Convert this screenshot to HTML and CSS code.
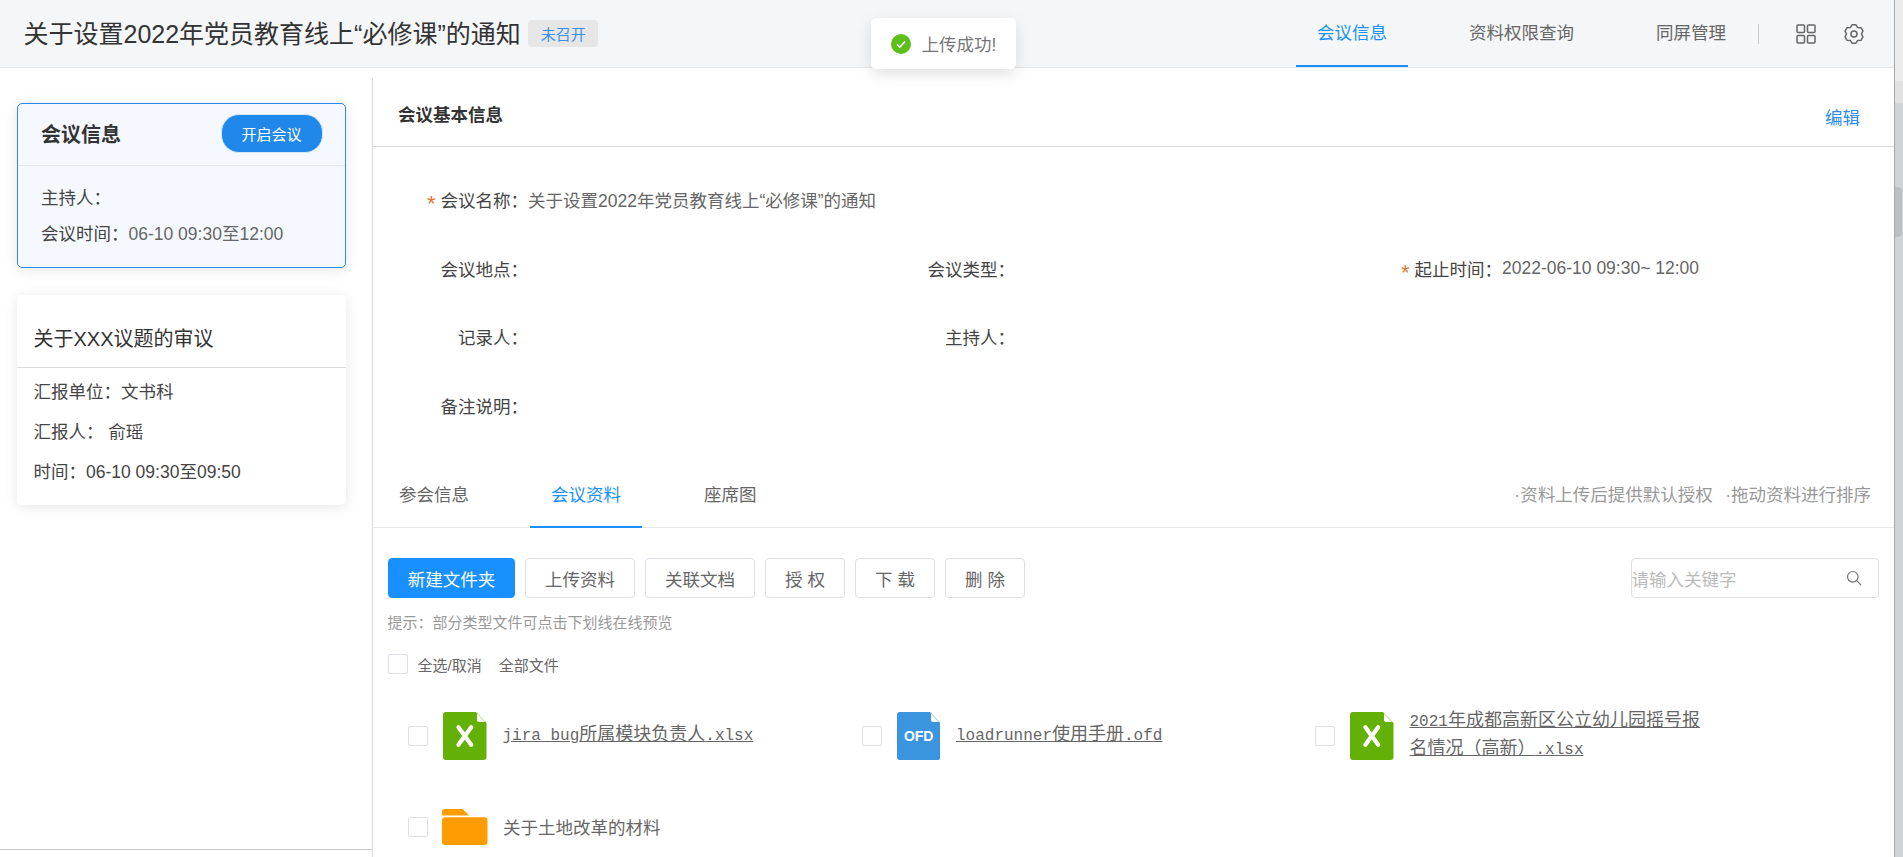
FILE: index.html
```html
<!DOCTYPE html>
<html lang="zh-CN">
<head>
<meta charset="utf-8">
<title>会议信息</title>
<link rel="stylesheet" href="styles.css">
</head>
<body>
<div class="window">
  <div class="page">
    <header class="topbar">
      <h1 class="doc-title">关于设置2022年党员教育线上“必修课”的通知</h1>
      <span class="status-badge">未召开</span>
      <nav class="top-nav">
        <a class="top-tab active">会议信息</a>
        <a class="top-tab">资料权限查询</a>
        <a class="top-tab">同屏管理</a>
      </nav>
      <span class="nav-sep"></span>
      <svg class="nav-icon grid-icon" viewBox="0 0 20 20" fill="none" stroke="#666" stroke-width="1.5">
        <rect x="1" y="1" width="7.5" height="7.5" rx="1"/><rect x="11.5" y="1" width="7.5" height="7.5" rx="1"/>
        <rect x="1" y="11.5" width="7.5" height="7.5" rx="1"/><rect x="11.5" y="11.5" width="7.5" height="7.5" rx="1"/>
      </svg>
      <svg class="nav-icon gear-icon" viewBox="0 0 20 20" fill="none" stroke="#666" stroke-width="1.5" stroke-linejoin="round">
        <path d="M8.04.81H11.96L13.7 3.59L16.98 3.71L18.94 7.1L17.4 10L18.94 12.9L16.98 16.29L13.7 16.41L11.96 19.19H8.04L6.3 16.41L3.02 16.29L1.06 12.9L2.6 10L1.06 7.1L3.02 3.71L6.3 3.59Z"/>
        <circle cx="10" cy="10" r="3"/>
      </svg>
    </header>

    <div class="content">
      <aside class="sidebar">
        <section class="card card-active">
          <div class="card-head">
            <h2 class="card-title">会议信息</h2>
            <button class="pill-btn">开启会议</button>
          </div>
          <div class="card-body">
            <p class="card-line">主持人：</p>
            <p class="card-line">会议时间：<span class="muted">06-10 09:30至12:00</span></p>
          </div>
        </section>
        <section class="card card-topic">
          <h3 class="topic-title">关于XXX议题的审议</h3>
          <div class="topic-body">
            <p class="topic-line">汇报单位：文书科</p>
            <p class="topic-line">汇报人： 俞瑶</p>
            <p class="topic-line">时间：06-10 09:30至09:50</p>
          </div>
        </section>
      </aside>

      <main class="main">
        <div class="section-head">
          <h2 class="section-title">会议基本信息</h2>
          <a class="edit-link">编辑</a>
        </div>

        <div class="form">
          <div class="field field-wide"><span class="field-label"><i class="req">*</i>会议名称：</span><span class="field-value">关于设置2022年党员教育线上“必修课”的通知</span></div>
          <div class="field"><span class="field-label">会议地点：</span></div>
          <div class="field"><span class="field-label">会议类型：</span></div>
          <div class="field"><span class="field-label"><i class="req">*</i>起止时间：</span><span class="field-value">2022-06-10 09:30~ 12:00</span></div>
          <div class="field"><span class="field-label">记录人：</span></div>
          <div class="field field-rest"><span class="field-label">主持人：</span></div>
          <div class="field field-wide"><span class="field-label">备注说明：</span></div>
        </div>

        <div class="sub-tabs">
          <a class="sub-tab">参会信息</a>
          <a class="sub-tab active">会议资料</a>
          <a class="sub-tab">座席图</a>
          <div class="sub-hints"><span>·资料上传后提供默认授权</span><span>·拖动资料进行排序</span></div>
        </div>

        <div class="toolbar">
          <button class="btn btn-primary">新建文件夹</button>
          <button class="btn">上传资料</button>
          <button class="btn">关联文档</button>
          <button class="btn btn-short">授 权</button>
          <button class="btn btn-short">下 载</button>
          <button class="btn btn-short">删 除</button>
          <div class="search">
            <span class="search-placeholder">请输入关键字</span>
            <svg class="search-icon" viewBox="0 0 16 16" fill="none" stroke="#777" stroke-width="1.2" stroke-linecap="round">
              <circle cx="6.8" cy="6.8" r="5.3"/><path d="M10.7 10.7L14.8 14.8"/>
            </svg>
          </div>
        </div>

        <p class="tip">提示：部分类型文件可点击下划线在线预览</p>

        <div class="select-row">
          <span class="check"></span>
          <span class="select-text">全选/取消</span>
          <span class="select-text">全部文件</span>
        </div>

        <div class="files">
          <div class="file">
            <span class="check"></span>
            <svg class="file-icon" viewBox="0 0 43.5 48">
              <path fill="#63b006" d="M3 0H33L43.5 11V45a3 3 0 0 1-3 3H3a3 3 0 0 1-3-3V3a3 3 0 0 1 3-3Z"/>
              <path fill="#fff" d="M34 1.5L42 10H36a2 2 0 0 1-2-2Z"/>
              <path stroke="#fff" stroke-width="4.2" stroke-linecap="round" d="M15.4 15.2L28.2 32.8M28.2 15.2L15.4 32.8"/>
            </svg>
            <a class="file-name"><span class="latin">jira bug</span>所属模块负责人<span class="latin">.xlsx</span></a>
          </div>
          <div class="file">
            <span class="check"></span>
            <svg class="file-icon" viewBox="0 0 43.5 48">
              <path fill="#3a94de" d="M3 0H33L43.5 11V45a3 3 0 0 1-3 3H3a3 3 0 0 1-3-3V3a3 3 0 0 1 3-3Z"/>
              <path fill="#fff" d="M34 1.5L42 10H36a2 2 0 0 1-2-2Z"/>
              <text class="ofd-label" x="21.7" y="29" text-anchor="middle">OFD</text>
            </svg>
            <a class="file-name"><span class="latin">loadrunner</span>使用手册<span class="latin">.ofd</span></a>
          </div>
          <div class="file">
            <span class="check"></span>
            <svg class="file-icon" viewBox="0 0 43.5 48">
              <path fill="#63b006" d="M3 0H33L43.5 11V45a3 3 0 0 1-3 3H3a3 3 0 0 1-3-3V3a3 3 0 0 1 3-3Z"/>
              <path fill="#fff" d="M34 1.5L42 10H36a2 2 0 0 1-2-2Z"/>
              <path stroke="#fff" stroke-width="4.2" stroke-linecap="round" d="M15.4 15.2L28.2 32.8M28.2 15.2L15.4 32.8"/>
            </svg>
            <a class="file-name file-name-wrap"><span class="latin">2021</span>年成都高新区公立幼儿园摇号报<br>名情况（高新）<span class="latin">.xlsx</span></a>
          </div>
          <div class="file">
            <span class="check"></span>
            <svg class="folder-icon" viewBox="0 0 45.5 36">
              <path fill="#ff9c00" d="M3 0H20.5L27 6.5H0V3a3 3 0 0 1 3-3Z"/>
              <path fill="#ff9c00" d="M3 8.3H42.5a3 3 0 0 1 3 3V33a3 3 0 0 1-3 3H3a3 3 0 0 1-3-3V11.3a3 3 0 0 1 3-3Z"/>
            </svg>
            <span class="folder-name">关于土地改革的材料</span>
          </div>
        </div>
      </main>
    </div>
  </div>

  <div class="scrollbar">
    <div class="scroll-top"></div>
    <div class="scroll-track"><div class="scroll-thumb"></div></div>
  </div>

  <div class="toast">
    <svg class="toast-icon" viewBox="0 0 20 20">
      <circle cx="10" cy="10" r="10" fill="#5cbf1a"/>
      <path d="M6 10.4L8.8 13.2L14 7.4" fill="none" stroke="#fff" stroke-width="1.5"/>
    </svg>
    <span>上传成功!</span>
  </div>
</div>
</body>
</html>
```
FILE: styles.css
```css
* { box-sizing: border-box; }
html, body { margin: 0; height: 100%; overflow: hidden; }
body {
  font-family: "Liberation Sans", "Noto Sans CJK SC", sans-serif;
  font-size: 17.5px;
  color: #333;
  background: #fff;
}
h1, h2, h3, p { margin: 0; font-weight: normal; }
a { color: inherit; }
button { font-family: inherit; cursor: pointer; }

.window { display: flex; width: 1903px; height: 857px; overflow: hidden; position: relative; }
.page { width: 1894px; height: 857px; flex: none; display: flex; flex-direction: column; }

/* top bar */
.topbar {
  height: 68px; flex: none; display: flex; align-items: center;
  padding: 0 30px 0 23.5px;
  background: #f5f6f8; border-bottom: 1px solid #e3e5e9;
}
.doc-title { font-size: 25px; color: #333; line-height: 34px; white-space: nowrap; }
.status-badge {
  margin-left: 7.5px; width: 70px; height: 27.5px;
  display: flex; align-items: center; justify-content: center;
  background: #e6e6e6; border-radius: 4px; color: #3d8ef0; font-size: 15px;
}
.top-nav { margin-left: auto; display: flex; gap: 40px; height: 67px; }
.top-tab {
  padding: 0 21px; line-height: 67px; height: 67px; color: #666; white-space: nowrap;
  border-bottom: 2px solid transparent;
}
.top-tab.active { color: #1890ff; border-bottom-color: #1890ff; }
.nav-sep { width: 1px; height: 20px; background: #c8c8c8; margin-left: 11px; }
.nav-icon { width: 20px; height: 20px; flex: none; }
.grid-icon { margin-left: 37px; }
.gear-icon { margin-left: 28px; }

.content { flex: 1; display: flex; min-height: 0; }

/* left column */
.sidebar {
  width: 372px; flex: none; height: 782px;
  padding: 35px 0 0 17px; border-bottom: 1px solid #ccc;
}
.card {
  width: 329px; background: #fff; border-radius: 5px;
  box-shadow: 0 2px 14px rgba(0, 0, 0, .1);
}
.card-active { height: 165px; background: #f5f9ff; border: 1px solid #2a8be8; }
.card-head {
  height: 62px; display: flex; align-items: center; justify-content: space-between;
  padding: 0 22.5px 2px 23px; border-bottom: 1px solid #e6e8ec;
}
.card-title { font-size: 20px; font-weight: bold; color: #333; }
.pill-btn {
  width: 102px; height: 39px; border: 1px solid #d7e6f6; border-radius: 18px;
  background: #2088ea; color: #fff; font-size: 15px; padding: 0;
}
.card-body { padding: 15px 0 0 23px; }
.card-line { line-height: 35.6px; color: #444; }
.muted { color: #666; }
.card-topic { height: 210px; margin-top: 27px; }
.topic-title {
  font-size: 20px; line-height: 28px; padding: 30px 15px 14px 16.5px;
  height: 73px; border-bottom: 1px solid #ddd; color: #333;
}
.topic-body { padding: 4px 0 0 16.5px; }
.topic-line { line-height: 40px; color: #444; white-space: pre; }

/* right column */
.main { flex: 1; min-width: 0; margin-top: 10px; border-left: 1px solid #d9d9d9; overflow: hidden; }
.section-head {
  height: 69px; display: flex; align-items: center; justify-content: space-between;
  padding: 3px 34px 0 25px; border-bottom: 1px solid #dcdcdc;
}
.section-title { font-size: 17.5px; font-weight: bold; color: #333; }
.edit-link { color: #2e8cf0; margin-top: 6px; }

.form {
  display: grid; grid-template-columns: repeat(3, 487px); grid-auto-rows: 68.75px;
  padding-top: 18px; height: 314px;
}
.field { display: flex; align-items: center; white-space: nowrap; }
.field-wide { grid-column: 1 / -1; }
.field-rest { grid-column: 2 / -1; }
.field-label { width: 155px; flex: none; text-align: right; color: #444; }
.field-value { color: #666; }
.req {
  font-style: normal; color: #d9793a; margin-right: 5px; font-size: 22px;
  display: inline-block; vertical-align: -4px; line-height: 0; height: 0;
}

.sub-tabs {
  height: 67px; display: flex; align-items: stretch; gap: 41px;
  padding: 0 23px 0 5px; border-bottom: 1px solid #e8e8e8;
}
.sub-tab { padding: 0 21px; line-height: 69px; color: #666; white-space: nowrap; border-bottom: 2px solid transparent; height: 67px; }
.sub-tab:nth-child(2) { margin-left: -1px; }
.sub-tab.active { color: #1890ff; border-bottom-color: #1890ff; }
.sub-hints { margin-left: auto; display: flex; gap: 12.5px; line-height: 69px; color: #999; white-space: nowrap; }

.toolbar { display: flex; align-items: stretch; gap: 10px; height: 40px; margin: 30px 15px 0 15px; }
.btn {
  width: 110px; height: 40px; padding: 0; border: 1px solid #dcdfe6; border-radius: 4px;
  background: #fff; color: #666; font-size: 17.5px;
}
.btn-short { width: 80px; white-space: pre; }
.btn-primary { width: 127px; background: #1890ff; border-color: #1890ff; color: #fff; }
.search {
  margin-left: auto; width: 248.5px; height: 40px; display: flex; align-items: center;
  justify-content: space-between; padding: 0 16px 0 0;
  border: 1px solid #dcdfe6; border-radius: 4px;
}
.search-placeholder { color: #bbb; }
.search-icon { width: 16px; height: 16px; }

.tip { margin: 15px 0 0 14.5px; font-size: 15px; line-height: 20px; color: #999; }

.select-row { display: flex; align-items: center; height: 20px; margin: 21px 0 0 15px; font-size: 15px; color: #666; }
.check {
  width: 20px; height: 20px; flex: none; background: #fff;
  border: 1px solid #dcdfe6; border-radius: 2px;
}
.select-text { margin-left: 9.5px; }
.select-text + .select-text { margin-left: 17px; }

.files { display: grid; grid-template-columns: repeat(3, 453.5px); grid-auto-rows: 48px; row-gap: 42.5px; margin: 38px 0 0 35px; }
.file { display: flex; align-items: center; }
.file-icon { width: 43.5px; height: 48px; flex: none; margin: 0 16px 0 15px; }
.ofd-label { font: bold 14px "Liberation Sans", sans-serif; fill: #fff; }
.folder-icon { width: 45.5px; height: 36px; flex: none; margin: 0 15.5px 0 14px; }
.file-name {
  font-size: 18px; line-height: 27.5px; color: #666; text-decoration: underline;
  font-family: "Liberation Mono", "Noto Sans CJK SC", monospace;
}
.file-name-wrap { width: 296px; }
.latin { font-size: 16px; }
.folder-name { color: #666; }

/* window scrollbar */
.scrollbar { flex: 1; display: flex; flex-direction: column; border-left: 1px solid #a8a8a8; }
.scroll-top { height: 81px; background: #ececec; border-bottom: 22px solid #e2e2e2; box-sizing: content-box; }
.scroll-track { flex: 1; background: #d2d3d5; padding-top: 84px; }
.scroll-thumb { width: 7px; height: 50px; background: #bcc0c2; border-radius: 0 4px 4px 0; }

/* toast */
.toast {
  position: absolute; left: 871px; top: 18px; width: 145px; height: 51px;
  display: flex; align-items: center; gap: 10.5px; padding-left: 20px;
  background: #fff; border-radius: 5px; color: #777;
  box-shadow: 0 5px 15px rgba(0, 0, 0, .12);
}
.toast-icon { width: 20px; height: 20px; flex: none; }
```
